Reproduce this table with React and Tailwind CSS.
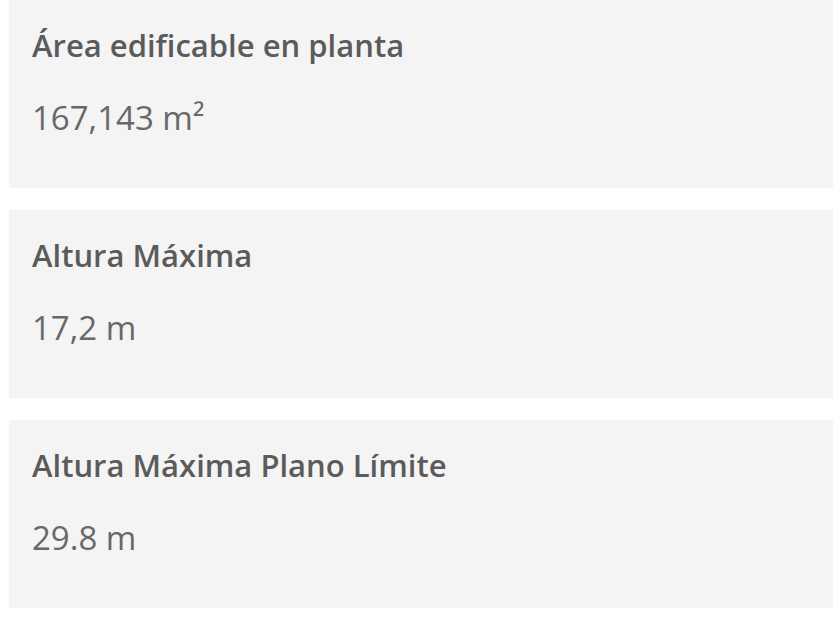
const items = [
  { label: "Área edificable en planta", value: "167,143 m²" },
  { label: "Altura Máxima", value: "17,2 m" },
  { label: "Altura Máxima Plano Límite", value: "29.8 m" },
];

export default function App() {
  return (
    <div
      className="min-h-screen bg-white pl-[9px] pr-[7px] flex flex-col gap-[22px]"
      style={{ fontFamily: "'Open Sans', 'Noto Sans', sans-serif" }}
    >
      {items.map((item) => (
        <div
          key={item.label}
          className="h-[188px] bg-[#f4f4f4] pl-[23px] pt-[27px] flex flex-col gap-[34px]"
        >
          <div className="text-[31px] leading-[37px] font-semibold text-[#5b5b5b]">
            {item.label}
          </div>
          <div className="text-[33px] leading-[40px] text-[#686868]">
            {item.value}
          </div>
        </div>
      ))}
    </div>
  );
}
